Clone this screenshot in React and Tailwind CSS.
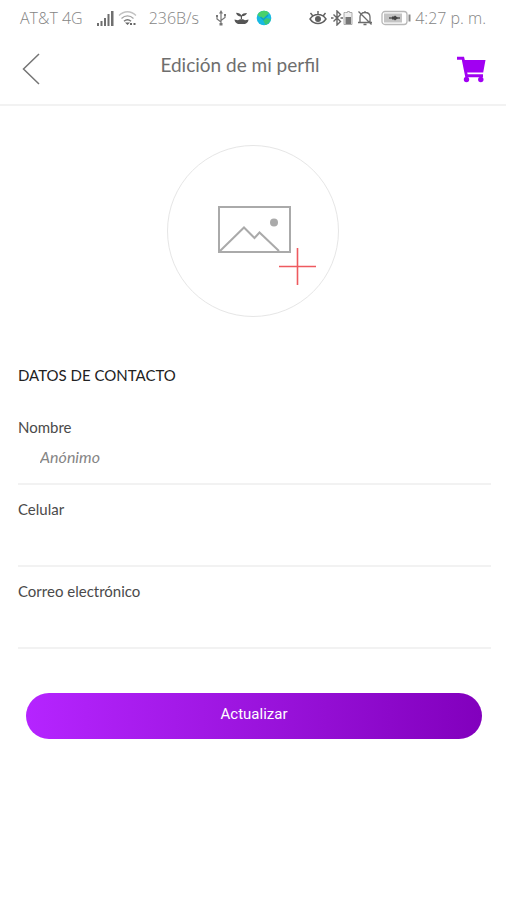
import { useState } from "react";

const SignalIcon = () => (
  <svg viewBox="0 0 17 17" fill="#6f6f6f" className="h-[17px] w-[17px]" aria-hidden="true">
    <path d="M0 13h2v3H0zM3.500 11h2v5h-2zM7 8h2v8H7zM10.500 4h2v12h-2zM14 1h2.500v15H14z" />
  </svg>
);

const WifiIcon = () => (
  <svg viewBox="0 0 19 16" fill="none" className="h-4 w-[19px]" aria-hidden="true">
    <path d="M1 5.500C6 .5 13 .5 18 5.500" stroke="#c2c2c2" strokeWidth="1.300" />
    <path d="M3.500 8.500c3.600-3.400 8.400-3.400 12 0" stroke="#a5a5a5" strokeWidth="1.300" />
    <path d="M6 11.300c2.200-2 4.800-2 7 0" stroke="#777" strokeWidth="1.400" />
    <path d="M7 12.500h5L9.500 15zM12 13h2v2h-2zM15.500 13h2v2h-2z" fill="#666" />
  </svg>
);

const UsbIcon = () => (
  <svg viewBox="0 0 12 16" fill="none" stroke="#777" strokeWidth="1.200" className="h-4 w-3" aria-hidden="true">
    <path d="M6 3v11M6 12L2 9V6M6 10.500l4-3V5" />
    <path d="M6 0L4 3.500h4zM4.500 13h3v2.500h-3zM1 5h2v2H1zM9 4h2v2H9z" fill="#777" stroke="none" />
  </svg>
);

const PlantIcon = () => (
  <svg viewBox="0 0 15 14" fill="#555" className="h-3.5 w-[15px]" aria-hidden="true">
    <path d="M.5 8.500l3.500.8 2-1h3l2 1 3.500-.8c0 2-1.500 3.500-3.500 4.500H4C2 12 .5 10.500.5 8.500z" />
    <path d="M6.800 8V5.500C4.500 5.500 2.500 4.200 2 1.800c3 0 4.500 1 5.300 2.700C8.500 2.700 10 2 13 2c-.600 2-2.200 3-5 3.300V8z" />
  </svg>
);

const GlobeIcon = () => (
  <svg viewBox="0 0 16 16" className="h-4 w-4" aria-hidden="true">
    <circle cx="8" cy="8" r="7.300" fill="#18b9e3" />
    <path d="M4 2c3-2 7-1.500 9 1l-2 3-2 1-2 2-3-2-2.500-2C2 3.700 3 2.700 4 2z" fill="#49d06b" />
    <path d="M7 10l3-2 4.800 1c-.600 3-2.600 5-5.300 6z" fill="#39c877" />
    <path d="M4.500 7l3 2.500L12 5" stroke="#0a9fc9" strokeWidth="1.300" fill="none" />
  </svg>
);

const EyeIcon = () => (
  <svg viewBox="0 0 18 16" fill="none" stroke="#5f5f5f" strokeWidth="1.400" className="h-4 w-[18px]" aria-hidden="true">
    <path d="M1 9c2-3 5-4.500 8-4.500S15 6 17 9c-2 3-5 4.500-8 4.500S3 12 1 9zM3.500 5.500L1.500 3M9 4V1M14.500 5.500L16.500 3" />
    <circle cx="9" cy="9" r="2.300" fill="#5f5f5f" />
  </svg>
);

const BluetoothIcon = () => (
  <svg viewBox="0 0 22 16" fill="none" className="h-4 w-[22px]" aria-hidden="true">
    <path d="M2.500 4.500l7 7L6 15V1l3.500 3.500-7 7" stroke="#666" strokeWidth="1.400" />
    <path d="M0 8h2.500M9.500 8h2.500" stroke="#666" strokeWidth="1.500" />
    <path d="M14.500 2.500h2v-1h2v1h2.500v12h-8v-12z" stroke="#aaa" fill="#eee" />
    <path d="M14.500 7h5.500v7h-5.500z" fill="#777" />
  </svg>
);

const BellOffIcon = () => (
  <svg viewBox="0 0 16 16" fill="none" stroke="#6b6b6b" strokeWidth="1.300" className="h-4 w-4" aria-hidden="true">
    <path d="M3 12.500V7c0-3 2-4.500 5-4.500S13 4 13 7v5.500M1 12.500h14M8 1v1.500M6.500 14.500h3M1.500 1.500l13 13" />
  </svg>
);

const BatteryIcon = () => (
  <svg viewBox="0 0 30 16" fill="none" className="h-4 w-[30px]" aria-hidden="true">
    <rect x="1" y="1.500" width="25" height="13" rx="3" stroke="#b8b8b8" strokeWidth="1.300" />
    <rect x="3" y="3.500" width="18" height="9" fill="#c4c4c4" />
    <path d="M8 8h11" stroke="#444" strokeWidth="1.300" />
    <path d="M11 6.500h2L14 5.500l3 2.500-3 2.500-1-1h-2z" fill="#444" />
    <path d="M28.500 4.500v7" stroke="#888" strokeWidth="2" />
  </svg>
);

const BackIcon = () => (
  <svg viewBox="0 0 18 32" fill="none" stroke="#757575" strokeWidth="1.500" className="h-8 w-[18px]" aria-hidden="true">
    <path d="M17 1L1.500 16 17 31" />
  </svg>
);

const CartIcon = () => (
  <svg viewBox="0 0 30 27" fill="#a100f2" className="h-[27px] w-[30px]" aria-hidden="true">
    <path d="M1 .8h7l.8 3.200H29.500L27.200 16.500H11.200l.4 1.700H27v3H9.300L5.800 3.800H1z" />
    <circle cx="10.500" cy="23.500" r="2.700" />
    <circle cx="24.800" cy="23.500" r="2.700" />
  </svg>
);

const PictureIcon = () => (
  <svg viewBox="0 0 100 80" fill="none" className="h-20 w-[100px]" aria-hidden="true">
    <rect x="2" y="2" width="71" height="45" stroke="#aaa" strokeWidth="2" />
    <path d="M3 46l24-23.500 10.500 10.500 5-5.500L62 46" stroke="#aaa" strokeWidth="2" />
    <circle cx="57" cy="17.500" r="4" fill="#aaa" />
    <path d="M80.500 43v37M62 61.500h37" stroke="#ee5a5f" strokeWidth="1.600" />
  </svg>
);

const fields = [
  { id: "nombre", label: "Nombre", type: "text", placeholder: "Anónimo" },
  { id: "celular", label: "Celular", type: "tel" },
  { id: "correo", label: "Correo electrónico", type: "email" },
];

export default function EditProfile() {
  const [values, setValues] = useState({ nombre: "", celular: "", correo: "" });

  const handleChange = (e) => {
    setValues({ ...values, [e.target.name]: e.target.value });
  };

  return (
    <div className="min-h-screen bg-white font-['Lato',sans-serif]">
      <div className="flex h-9 items-center justify-between px-5 font-['Open_Sans',sans-serif] text-base font-light text-[#858585]">
        <div className="flex items-center">
          <span className="mr-3.5 whitespace-nowrap">AT&amp;T 4G</span>
          <SignalIcon />
          <span className="ml-1 mr-3">
            <WifiIcon />
          </span>
          <span className="mr-4">236B/s</span>
          <span className="flex items-center gap-[7px]">
            <UsbIcon />
            <PlantIcon />
            <GlobeIcon />
          </span>
        </div>
        <div className="flex items-center gap-1">
          <EyeIcon />
          <BluetoothIcon />
          <BellOffIcon />
          <span className="ml-1">
            <BatteryIcon />
          </span>
          <span className="whitespace-nowrap">4:27 p. m.</span>
        </div>
      </div>

      <header className="flex h-[70px] items-center border-b-2 border-[#f2f2f2] px-5 pb-0.5">
        <button type="button" aria-label="Regresar" className="flex w-8 pl-0.5">
          <BackIcon />
        </button>
        <h1 className="flex-1 pb-2 pr-7 text-center text-[19px] text-[#6e6e6e]">Edición de mi perfil</h1>
        <button type="button" aria-label="Carrito" className="flex">
          <CartIcon />
        </button>
      </header>

      <main className="pb-8 pt-[39px]">
        <button
          type="button"
          aria-label="Cambiar foto de perfil"
          className="mx-auto flex h-[172px] w-[172px] items-center justify-center rounded-full border border-[#e6e6e6] pl-7 pt-7"
        >
          <PictureIcon />
        </button>

        <form onSubmit={(e) => e.preventDefault()} className="mt-12">
          <div className="pl-[18px] pr-[15px]">
            <h2 className="text-[15px] leading-5 text-[#222]">DATOS DE CONTACTO</h2>
            <div className="mt-8 flex flex-col gap-3.5">
              {fields.map((field) => (
                <div key={field.id} className="border-b-2 border-[#f2f2f2] pb-1.5">
                  <label htmlFor={field.id} className="block text-[15px] leading-5 text-[#4a4a4a]">
                    {field.label}
                  </label>
                  <input
                    id={field.id}
                    name={field.id}
                    type={field.type}
                    placeholder={field.placeholder}
                    value={values[field.id]}
                    onChange={handleChange}
                    className="block h-10 w-full bg-transparent pb-0.5 pl-[22px] text-base text-[#4a4a4a] outline-none placeholder:italic placeholder:text-[#858585]"
                  />
                </div>
              ))}
            </div>
          </div>
          <div className="mt-11 pl-[26px] pr-6">
            <button
              type="submit"
              className="h-[46px] w-full rounded-full bg-linear-to-r from-[#b524ff] to-[#8200bd] pb-1 font-['Roboto',sans-serif] text-[15px] text-white"
            >
              Actualizar
            </button>
          </div>
        </form>
      </main>
    </div>
  );
}
